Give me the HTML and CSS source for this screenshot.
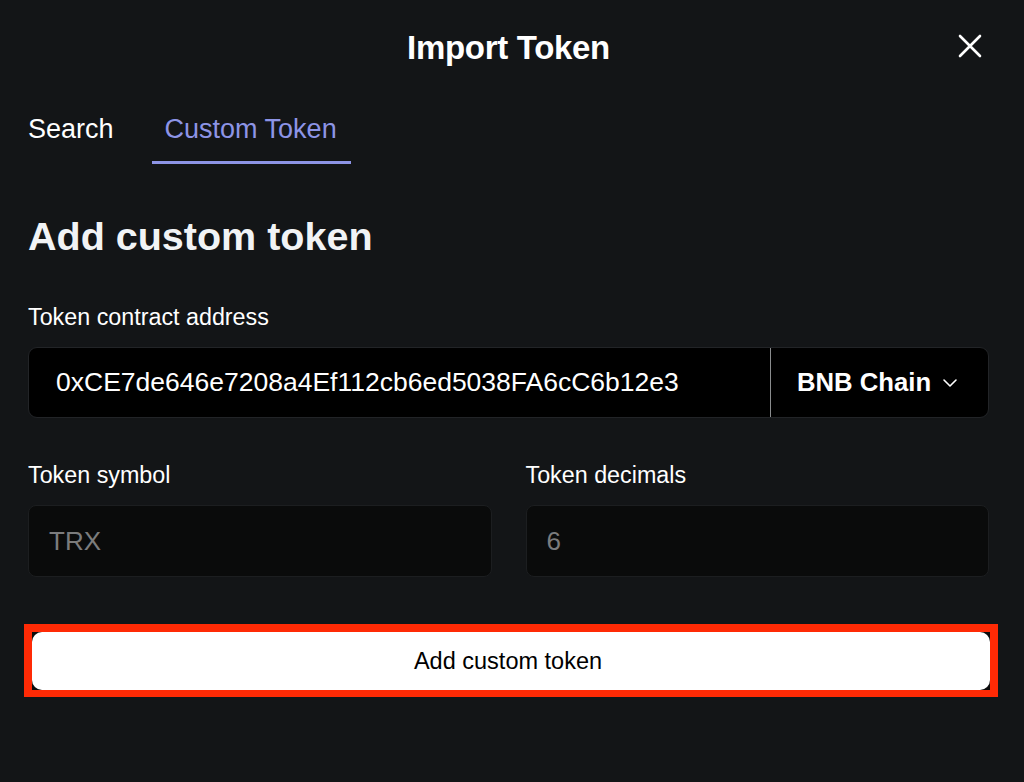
FILE: index.html
```html
<!DOCTYPE html>
<html lang="en">
<head>
<meta charset="utf-8">
<title>Import Token</title>
<link rel="stylesheet" href="styles.css">
</head>
<body>
<div class="modal">
  <header class="modal-header">
    <span></span>
    <h1 class="modal-title">Import Token</h1>
    <button class="close-btn" aria-label="Close">
      <svg width="24" height="24" viewBox="0 0 24 24" fill="none" stroke="#ffffff" stroke-width="2.6" stroke-linecap="round"><path d="M2 2L22 22M22 2L2 22"/></svg>
    </button>
  </header>

  <nav class="tabs">
    <div class="tab">Search</div>
    <div class="tab tab-active">Custom Token</div>
  </nav>

  <h2 class="section-title">Add custom token</h2>

  <div class="field-label first-label">Token contract address</div>
  <div class="address-box">
    <div class="address-text">0xCE7de646e7208a4Ef112cb6ed5038FA6cC6b12e3</div>
    <div class="chain-select">
      <span class="chain-name">BNB Chain</span>
      <svg class="chevron" width="16" height="10" viewBox="0 0 16 10" fill="none" stroke="#ffffff" stroke-width="1.6" stroke-linecap="round" stroke-linejoin="round"><path d="M2 2L8 8L14 2"/></svg>
    </div>
  </div>

  <div class="field-row">
    <div class="field">
      <div class="field-label">Token symbol</div>
      <div class="input-box">TRX</div>
    </div>
    <div class="field">
      <div class="field-label">Token decimals</div>
      <div class="input-box">6</div>
    </div>
  </div>

  <div class="highlight">
    <button class="primary-btn">Add custom token</button>
  </div>
</div>
</body>
</html>
```

FILE: styles.css
```css
* { box-sizing: border-box; }
html, body {
  margin: 0;
  padding: 0;
  background: #131517;
  height: 100%;
}
body {
  font-family: "Liberation Sans", Arial, sans-serif;
  color: #ffffff;
}
.modal {
  padding: 0 35px 0 28px;
}
.modal-header {
  height: 96px;
  display: grid;
  grid-template-columns: 1fr auto 1fr;
  align-items: center;
}
.modal-title {
  margin: 0;
  font-size: 33px;
  font-weight: 700;
  letter-spacing: -0.3px;
  line-height: 36px;
}
.close-btn {
  justify-self: end;
  margin: -4px 7px 0 0;
  padding: 0;
  background: none;
  border: 0;
  display: flex;
}
.tabs {
  display: flex;
  gap: 24px;
  margin-left: -13px;
}
.tab {
  font-size: 27px;
  line-height: 32px;
  padding: 17px 14px 16px 13px;
  border-bottom: 3px solid transparent;
  color: #ffffff;
}
.tab-active {
  color: #8d94e6;
  border-bottom-color: #8d94e6;
}
.section-title {
  margin: 50px 0 0;
  font-size: 39.5px;
  line-height: 44px;
  font-weight: 700;
  color: #f1f3f5;
}
.field-label {
  font-size: 23.3px;
  line-height: 24px;
  color: #ffffff;
}
.first-label {
  margin-top: 47px;
}
.address-box {
  margin-top: 18px;
  height: 71px;
  display: flex;
  background: #000000;
  border: 1px solid #222427;
  border-radius: 9px;
  overflow: hidden;
}
.address-text {
  flex: 1;
  display: flex;
  align-items: center;
  padding-left: 27px;
  font-size: 26.5px;
  color: #ffffff;
  border-right: 1px solid #8a8c8e;
}
.chain-select {
  width: 217px;
  display: flex;
  align-items: center;
  padding-left: 26px;
  gap: 11px;
}
.chain-name {
  font-size: 25.7px;
  font-weight: 700;
}
.field-row {
  margin-top: 45px;
  display: grid;
  grid-template-columns: 1fr 1fr;
  gap: 34px;
}
.field .input-box {
  margin-top: 18px;
}
.input-box {
  height: 72px;
  background: #0a0b0b;
  border: 1px solid #1c1e20;
  border-radius: 8px;
  display: flex;
  align-items: center;
  padding-left: 20px;
  font-size: 26px;
  color: #7b7c7d;
}
.highlight {
  margin: 47px -9px 0 -4px;
  border: 8px solid #ff2a05;
  border-bottom-width: 7px;
  background: #0b0c0d;
}
.primary-btn {
  display: block;
  width: 100%;
  height: 58px;
  border: 0;
  border-radius: 10px;
  background: #ffffff;
  color: #000000;
  font-family: "Liberation Sans", Arial, sans-serif;
  font-size: 23.5px;
  padding: 0 6px 0 0;
}
```
